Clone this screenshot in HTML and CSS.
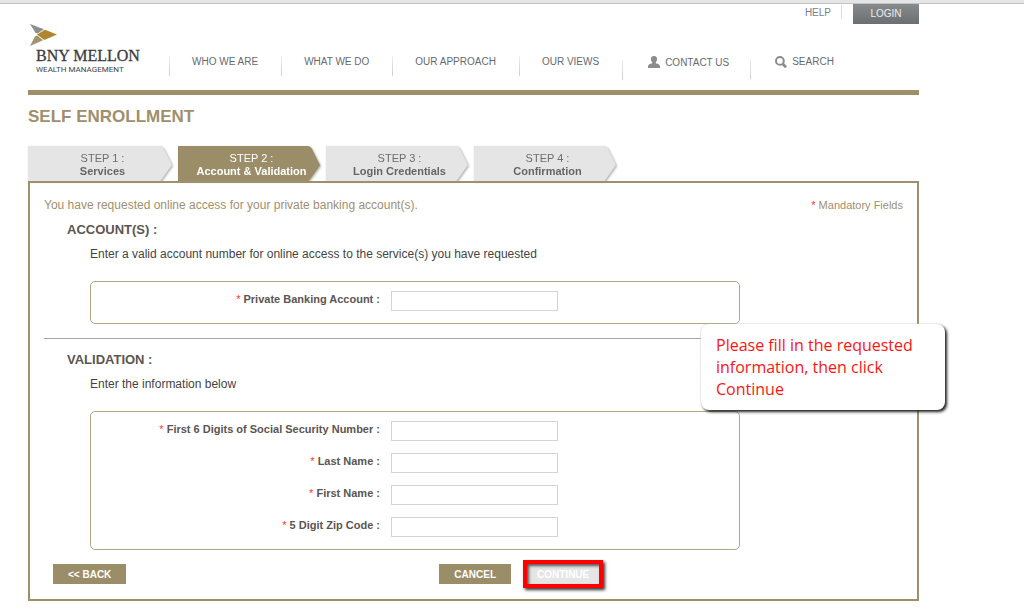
FILE: index.html
```html
<!DOCTYPE html>
<html lang="en">
<head>
    <meta charset="utf-8">
    <title>Self Enrollment</title>
    <link rel="stylesheet" href="styles.css">
</head>
<body>
    <div class="page">

        <header class="header">
            <a class="logo" href="#">
                <svg class="logo-arrow" viewBox="0 0 27 22" aria-hidden="true">
                    <path fill="#8b8f92" d="M0 0 L14 5.2 L7.5 9.6 L5.6 9 Z"/>
                    <path fill="#b0852f" d="M7 10.6 L15 5.8 L27 10.6 L15 15.8 L13.5 15.6 Z"/>
                    <path fill="#a2926d" d="M5 12.6 L7.2 11.6 L13 16.2 L0 22 Z"/>
                </svg>
                <span class="logo-name">BNY MELLON</span>
                <span class="logo-sub">WEALTH MANAGEMENT</span>
            </a>

            <div class="header-right">
                <div class="utility">
                    <a class="help" href="#">HELP</a>
                    <button class="login" type="button">LOGIN</button>
                </div>
                <nav class="menu">
                    <a href="#">WHO WE ARE</a>
                    <a href="#">WHAT WE DO</a>
                    <a href="#">OUR APPROACH</a>
                    <a href="#">OUR VIEWS</a>
                    <a class="contact" href="#">
                        <svg class="icon" viewBox="0 0 12 12" aria-hidden="true">
                            <path fill="#8a8c8e" d="M6 0 C8.2 0 9.2 1.3 9.1 3.2 C9 4.7 8.4 5.6 7.8 6.2 V7.2 C10 7.8 12 8.5 12 10.4 V12 H0 V10.4 C0 8.5 2 7.8 4.2 7.2 V6.2 C3.6 5.6 3 4.7 2.9 3.2 C2.8 1.3 3.8 0 6 0 Z"/>
                        </svg>
                        CONTACT US
                    </a>
                    <a class="search" href="#">
                        <svg class="icon" viewBox="0 0 13 13" aria-hidden="true">
                            <circle cx="5.3" cy="5.3" r="4.2" fill="none" stroke="#8a8c8e" stroke-width="2.2"/>
                            <path stroke="#8a8c8e" stroke-width="3" d="M8.2 8.4 L12 12.2"/>
                        </svg>
                        SEARCH
                    </a>
                </nav>
            </div>
        </header>

        <h1 class="title">SELF ENROLLMENT</h1>

        <ol class="steps">
            <li class="step"><div class="step-shape">STEP 1 :<b>Services</b></div></li>
            <li class="step active"><div class="step-shape">STEP 2 :<b>Account &amp; Validation</b></div></li>
            <li class="step"><div class="step-shape">STEP 3 :<b>Login Credentials</b></div></li>
            <li class="step"><div class="step-shape">STEP 4 :<b>Confirmation</b></div></li>
        </ol>

        <form class="panel">
            <div class="intro">
                <p class="intro-text">You have requested online access for your private banking account(s).</p>
                <p class="mandatory"><span class="star">*</span> Mandatory Fields</p>
            </div>

            <h2 class="section-title">ACCOUNT(S) :</h2>
            <p class="section-text">Enter a valid account number for online access to the service(s) you have requested</p>
            <div class="box">
                <div class="field">
                    <label for="account"><span class="star">*</span> Private Banking Account :</label>
                    <input type="text" id="account">
                </div>
            </div>

            <hr class="divider">

            <h2 class="section-title">VALIDATION :</h2>
            <p class="section-text">Enter the information below</p>
            <div class="box">
                <div class="field">
                    <label for="ssn"><span class="star">*</span> First 6 Digits of Social Security Number :</label>
                    <input type="text" id="ssn">
                </div>
                <div class="field">
                    <label for="last"><span class="star">*</span> Last Name :</label>
                    <input type="text" id="last">
                </div>
                <div class="field">
                    <label for="first"><span class="star">*</span> First Name :</label>
                    <input type="text" id="first">
                </div>
                <div class="field">
                    <label for="zip"><span class="star">*</span> 5 Digit Zip Code :</label>
                    <input type="text" id="zip">
                </div>
            </div>

            <div class="buttons">
                <button class="btn back" type="button">&lt;&lt; BACK</button>
                <button class="btn" type="button">CANCEL</button>
                <div class="highlight">
                    <button class="btn continue" type="submit">CONTINUE</button>
                </div>
            </div>

            <div class="callout">Please fill in the requested information, then click Continue</div>
        </form>

    </div>
</body>
</html>
```
FILE: styles.css
```css
* {
    box-sizing: border-box;
}

body {
    margin: 0;
    border-top: 3px solid #e5e5e5;
    background-color: #fff;
    font-family: Arial, "Liberation Sans", sans-serif;
    font-size: 12px;
    color: #444;
}

h1, h2, p, ol {
    margin: 0;
    padding: 0;
}

a {
    color: #666a70;
    text-decoration: none;
}

button {
    font-family: inherit;
    border: none;
    cursor: pointer;
}

.page {
    padding: 0 105px 9px 28px;
    border-top: 1px solid #c4c4c4;
}

/* Header */
.header {
    display: flex;
    height: 91px;
    border-bottom: 5px solid #9f8f6b;
}

.logo {
    display: flex;
    flex-direction: column;
    width: 141px;
    padding-top: 20px;
}

.logo-arrow {
    width: 27px;
    height: 22px;
    margin-left: 2px;
}

.logo-name {
    margin-left: 8px;
    font-family: "Liberation Serif", serif;
    font-size: 16px;
    line-height: 20px;
    color: #3c3c3c;
    white-space: nowrap;
    -webkit-text-stroke: 0.3px #3c3c3c;
}

.logo-sub {
    margin-left: 8px;
    font-family: Roboto, sans-serif;
    font-size: 8px;
    line-height: 8px;
    color: #444;
    white-space: nowrap;
}

.header-right {
    flex: 1;
}

.utility {
    display: flex;
    justify-content: flex-end;
    height: 52px;
}

.help {
    height: 14px;
    margin: 1px 11px 0 0;
    padding-right: 10px;
    border-right: 1px solid #e2dcd6;
    font-size: 10px;
    line-height: 15px;
    color: #74828e;
}

.login {
    width: 66px;
    height: 20px;
    padding: 0 0 2px;
    background: linear-gradient(#888b8d, #6b6f71);
    font-size: 10px;
    color: #eee;
}

.menu {
    display: flex;
}

.menu a {
    display: flex;
    height: 20px;
    padding: 0 23px 0 22px;
    border-left: 1px solid #d8d8d8;
    border-image: linear-gradient(#f0f0f0, #ccc) 1;
    font-size: 10px;
    line-height: 12px;
    white-space: nowrap;
}

.menu .contact {
    margin-top: 4px;
    padding: 0 21px 0 25px;
    line-height: 6px;
}

.menu .search {
    margin-top: 3px;
    padding: 0 24px;
    line-height: 5px;
}

.icon {
    width: 12px;
    height: 12px;
    margin: -4px 5px 0 0;
}

.search .icon {
    margin-top: -3px;
}

.title {
    margin-top: 12px;
    font-size: 17px;
    line-height: 20px;
    color: #9f8f6b;
}

/* Step tabs */
.steps {
    display: flex;
    gap: 6px;
    margin-top: 19px;
    list-style: none;
}

.step {
    width: 142px;
    filter: drop-shadow(1px 1px 1px #aaa);
}

.step:first-child {
    width: 144px;
}

.step-shape {
    height: 35px;
    padding: 6px 0 0 5px;
    background-color: #e5e5e5;
    clip-path: polygon(0 0, 92% 0, 94% 2px, 100% 19px, 92% 100%, 0 100%);
    font-size: 11px;
    line-height: 13px;
    text-align: center;
    color: #6e6e6e;
}

.step-shape b {
    display: block;
    color: #666;
}

.active .step-shape,
.active .step-shape b {
    background-color: #9c8d69;
    color: #fff;
}

/* Form panel */
.panel {
    position: relative;
    padding: 14px 14px 11px;
    border: 2px solid #9f8f6b;
}

.intro {
    display: flex;
    justify-content: space-between;
    line-height: 16px;
    color: #a09070;
}

.mandatory {
    font-size: 11px;
}

.star {
    color: #f33;
    font-weight: normal;
}

.section-title {
    margin: 9px 0 0 23px;
    font-size: 13px;
    line-height: 16px;
    color: #5c5552;
}

.section-text {
    margin: 8px 0 0 46px;
    line-height: 16px;
}

.box {
    width: 650px;
    margin: 19px 0 0 46px;
    padding: 9px 0 12px;
    border: 1px solid #b3a688;
    border-radius: 5px;
}

.field {
    display: flex;
    gap: 11px;
    align-items: flex-start;
}

.field + .field {
    margin-top: 12px;
}

.field label {
    width: 289px;
    font-size: 11px;
    line-height: 17px;
    font-weight: bold;
    text-align: right;
    color: #5c5552;
}

.field input {
    width: 167px;
    height: 20px;
    border: 1px solid #d4d4d4;
    background-color: #fff;
}

.divider {
    height: 1px;
    margin: 14px 0 13px;
    border: none;
    background-color: #a5a5a5;
}

.buttons {
    display: flex;
    align-items: center;
    margin: 10px 0 0 9px;
}

.btn {
    height: 20px;
    padding: 0 15px;
    background-color: #9c8d69;
    font-size: 10px;
    font-weight: bold;
    color: #fff;
}

.back {
    margin-right: 313px;
}

/* Red marker round the next button to press */
.highlight {
    display: flex;
    margin-left: 12px;
    border: 4px solid #fe0000;
    box-shadow: 2px 2px 3px #333;
}

.continue {
    padding: 0 10px;
    background-color: #e5e5e5;
    box-shadow: inset 2px 2px 3px #555;
}

.callout {
    position: absolute;
    top: 141px;
    right: -28px;
    width: 244px;
    padding: 10px 15px;
    border-radius: 8px;
    background-color: #fff;
    box-shadow: 2px 2px 3px #222, 0 0 2px #ccc;
    font-family: "Open Sans", sans-serif;
    font-size: 16px;
    line-height: 22px;
    color: #fb1414;
}
```
